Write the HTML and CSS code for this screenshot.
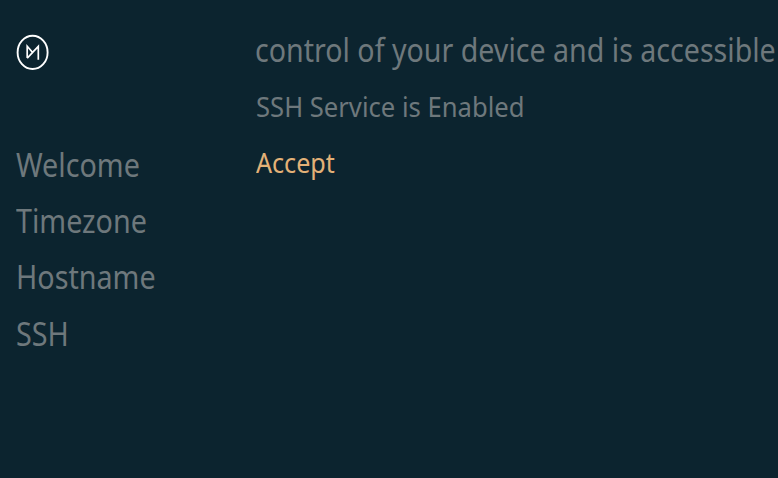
FILE: index.html
```html
<!DOCTYPE html>
<html lang="en">
<head>
<meta charset="utf-8">
<title>Setup</title>
<link rel="stylesheet" href="styles.css">
</head>
<body>
<div class="app">
  <aside class="sidebar">
    <svg class="logo" viewBox="0 0 34 36" fill="none" stroke="#fff">
      <ellipse cx="16.600" cy="18.400" rx="15" ry="16.600" stroke-width="1.900"/>
      <path d="M11.200 24V12.300L16.600 18.400L11.200 24.300M16.600 18.400L22.300 12.300V25.800" stroke-width="1.700"/>
    </svg>
    <nav class="steps">
      <a class="step"><span class="label">Welcome</span></a>
      <a class="step"><span class="label">Timezone</span></a>
      <a class="step"><span class="label">Hostname</span></a>
      <a class="step"><span class="label">SSH</span></a>
    </nav>
  </aside>
  <main class="content">
    <p class="lead"><span class="label">control of your device and is accessible</span></p>
    <p class="status"><span class="label">SSH Service is Enabled</span></p>
    <button class="accept"><span class="label">Accept</span></button>
  </main>
</div>
</body>
</html>
```
FILE: styles.css
```css
* { box-sizing: border-box; }
body {
  margin: 0;
  height: 478px;
  overflow: hidden;
  background: #0c242f;
  color: #6e787c;
  font-family: "Noto Sans", sans-serif;
}
.app { display: grid; grid-template-columns: 255px minmax(0, 1fr); overflow: hidden; }
.sidebar { padding: 34px 0 0 16px; }
.logo { display: block; width: 34px; height: 36px; }
.steps { display: flex; flex-direction: column; margin-top: 67px; }
.step { height: 56.2px; line-height: 56px; font-size: 32px; }
.label { display: inline-block; white-space: nowrap; transform-origin: 0 50%; transform: scaleX(.897); }
.content { padding-top: 22px; }
.lead, .status { margin: 0; height: 56px; line-height: 56px; }
.lead { font-size: 32px; }
.lead .label { transform: scaleX(.8935); }
.status { padding-left: 1px; font-size: 28px; }
.status .label { transform: scaleX(.915); }
.accept {
  display: block;
  padding: 0 0 0 1px;
  border: 0;
  background: none;
  color: #e3b177;
  font: 28px/56px "Noto Sans", sans-serif;
}
```
